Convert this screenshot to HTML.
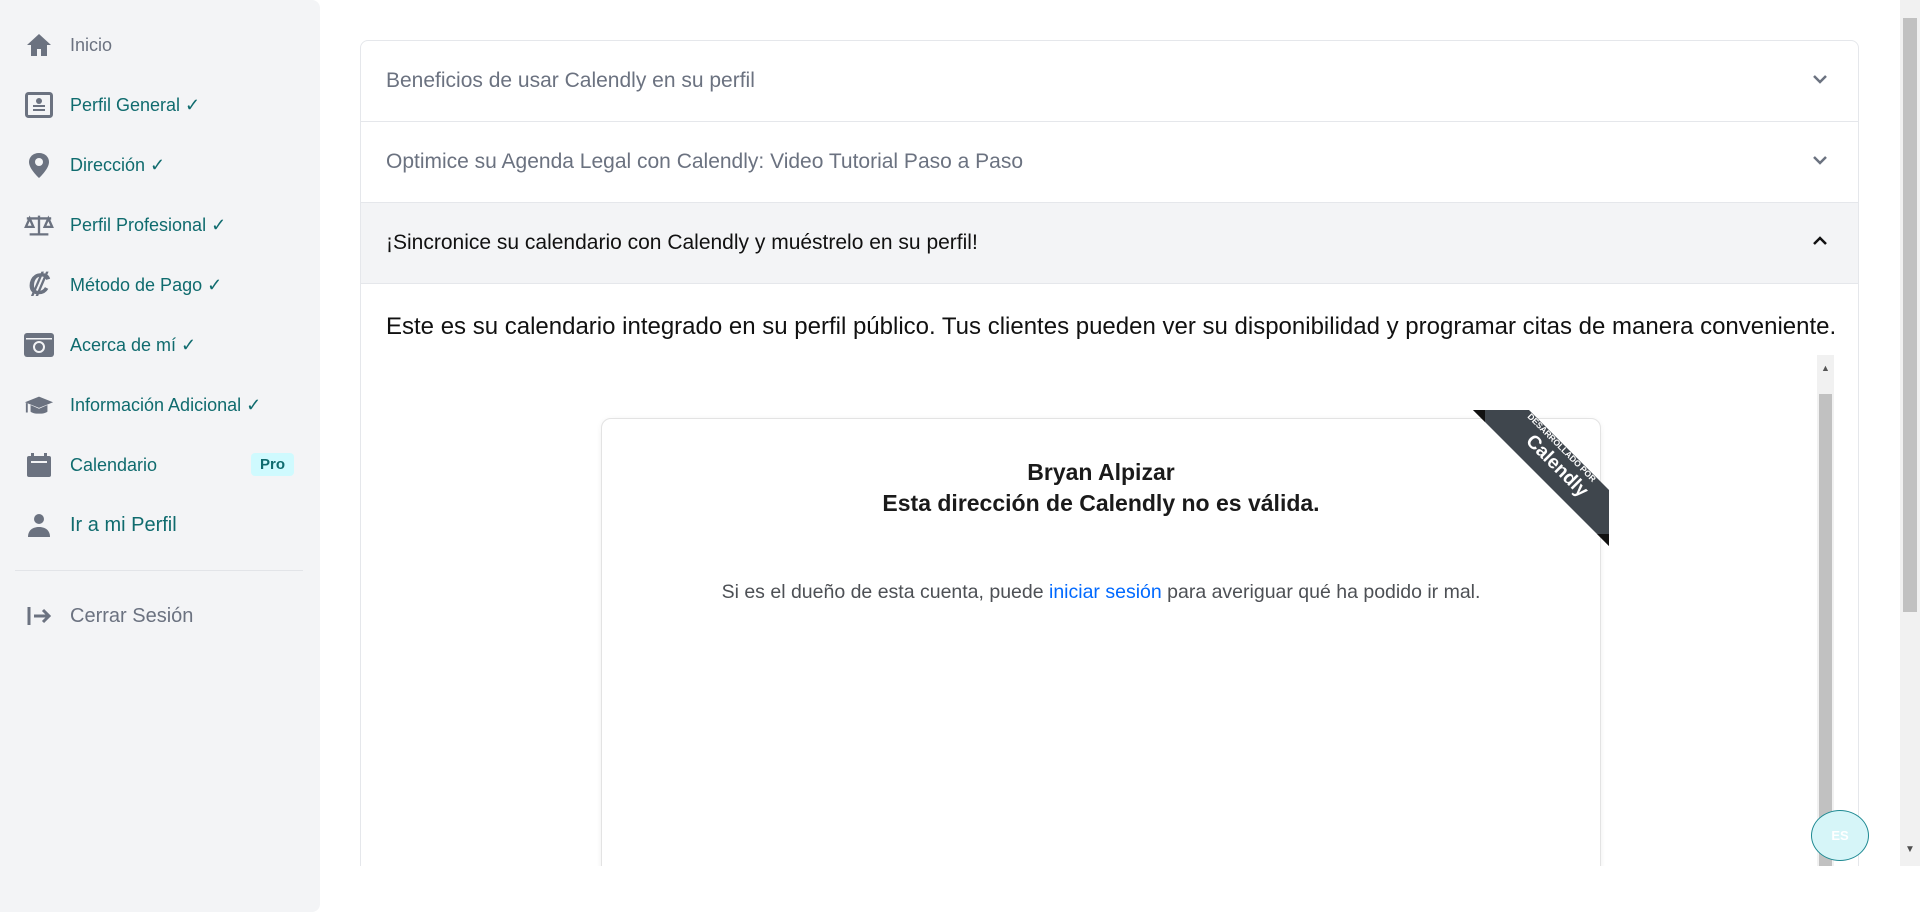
<!DOCTYPE html>
<html><head><meta charset="utf-8"><style>
*{box-sizing:border-box;margin:0;padding:0}
body{width:1920px;height:912px;overflow:hidden;background:#fff;font-family:"Liberation Sans",sans-serif;position:relative}
.side{position:absolute;left:0;top:0;width:320px;height:912px;background:#f3f4f6;border-radius:0 8px 8px 0}
.item{position:absolute;left:0;height:40px;display:flex;align-items:center;font-size:18px;color:#0f6b6e}
.item .ic{width:30px;margin-left:24px;display:flex;justify-content:center}
.item span.t{margin-left:16px}
.main{position:absolute;left:320px;top:0;width:1580px;height:866px;overflow:hidden}
.card{position:absolute;left:40px;top:40px;width:1499px;height:900px;border:1px solid #e5e7eb;border-radius:8px;overflow:hidden}
.row{height:81px;border-bottom:1px solid #e5e7eb;display:flex;align-items:center;padding-left:25px;font-size:21px;color:#6b7280;position:relative}
.row svg{position:absolute;right:30px;top:33px}
.para{position:absolute;left:25px;top:272px;font-size:24px;color:#111;white-space:nowrap}
.cal{position:absolute;left:240px;top:377px;width:1000px;height:600px;border:1px solid #e3e3e3;border-radius:10px;background:#fff;box-shadow:0 1px 6px rgba(0,0,0,.06)}
.sb{position:absolute;left:1456px;top:314px;width:17px;height:600px;background:#f1f1f1}
.pagesb{position:absolute;left:1900px;top:0;width:20px;height:866px;background:#f1f1f1}
</style></head><body>
<div class="side">
 <div class="item" style="top:25px;color:#6b7280"><div class="ic"><svg width="26" height="24" viewBox="0 0 26 24"><path d="M13 1L1 12h4v11h6v-7h4v7h6V12h4z" fill="#6b7280"/></svg></div><span class="t">Inicio</span></div>
 <div class="item" style="top:85px"><div class="ic"><svg width="28" height="26" viewBox="0 0 28 26"><rect x="1.5" y="1.5" width="25" height="23" rx="2" fill="none" stroke="#6b7280" stroke-width="3"/><circle cx="14" cy="9" r="3" fill="#6b7280"/><rect x="8" y="13" width="12" height="2" fill="#6b7280"/><rect x="8" y="17" width="12" height="2" fill="#6b7280"/></svg></div><span class="t">Perfil General ✓</span></div>
 <div class="item" style="top:145px"><div class="ic"><svg width="22" height="26" viewBox="0 0 22 26"><path d="M11 1C5 1 1 5 1 10c0 7 10 16 10 16s10-9 10-16c0-5-4-9-10-9z" fill="#6b7280"/><circle cx="11" cy="10" r="4" fill="#f3f4f6"/></svg></div><span class="t">Dirección ✓</span></div>
 <div class="item" style="top:205px"><div class="ic"><svg width="32" height="24" viewBox="0 0 32 24"><g fill="none" stroke="#6b7280" stroke-width="2.5"><path d="M16 2v20M6 22h20M3 5h26M6 5l-4 9h8zM26 5l-4 9h8z"/></g></svg></div><span class="t">Perfil Profesional ✓</span></div>
 <div class="item" style="top:265px"><div class="ic"><span style="font-size:30px;font-weight:bold;color:#6b7280;font-style:italic">₡</span></div><span class="t">Método de Pago ✓</span></div>
 <div class="item" style="top:325px"><div class="ic"><svg width="30" height="24" viewBox="0 0 30 24"><rect x="0" y="0" width="30" height="24" rx="3" fill="#6b7280"/><rect x="2" y="5" width="26" height="1.5" fill="#f3f4f6"/><circle cx="15" cy="14" r="5" fill="none" stroke="#f3f4f6" stroke-width="2"/></svg></div><span class="t">Acerca de mí ✓</span></div>
 <div class="item" style="top:385px"><div class="ic"><svg width="32" height="22" viewBox="0 0 32 22"><path d="M16 2L1 8l15 6 15-6z" fill="#6b7280"/><path d="M7 11v7c3 3 15 3 18 0v-7l-9 4z" fill="#6b7280"/><rect x="2" y="9" width="2" height="10" fill="#6b7280"/></svg></div><span class="t">Información Adicional ✓</span></div>
 <div class="item" style="top:445px;width:300px"><div class="ic"><svg width="26" height="26" viewBox="0 0 26 26"><rect x="1" y="4" width="24" height="21" rx="2" fill="#6b7280"/><rect x="5" y="1" width="3" height="6" fill="#6b7280"/><rect x="18" y="1" width="3" height="6" fill="#6b7280"/><rect x="5" y="9" width="16" height="2" fill="#f3f4f6"/></svg></div><span class="t">Calendario</span><span style="position:absolute;left:251px;top:8px;background:#cffafe;color:#0f6b6e;font-size:15px;font-weight:bold;padding:3px 9px;border-radius:4px">Pro</span></div>
 <div class="item" style="top:505px;font-size:20px"><div class="ic"><svg width="24" height="24" viewBox="0 0 24 24"><circle cx="12" cy="6" r="5" fill="#6b7280"/><path d="M1 24c0-7 5-10 11-10s11 3 11 10z" fill="#6b7280"/></svg></div><span class="t">Ir a mi Perfil</span></div>
 <div style="position:absolute;left:15px;top:570px;width:288px;height:1px;background:#e2e4e8"></div>
 <div class="item" style="top:596px;font-size:20px;color:#6b7280"><div class="ic"><svg width="26" height="22" viewBox="0 0 26 22"><g stroke="#6b7280" stroke-width="3" fill="none"><path d="M3 2v18M8 11h15M17 5l6 6-6 6"/></g></svg></div><span class="t">Cerrar Sesión</span></div>
</div>
<div class="main">
 <div class="card">
  <div class="row">Beneficios de usar Calendly en su perfil<svg width="16" height="10" viewBox="0 0 16 10"><path d="M2 2l6 6 6-6" stroke="#6b7280" stroke-width="2.5" fill="none"/></svg></div>
  <div class="row">Optimice su Agenda Legal con Calendly: Video Tutorial Paso a Paso<svg width="16" height="10" viewBox="0 0 16 10"><path d="M2 2l6 6 6-6" stroke="#6b7280" stroke-width="2.5" fill="none"/></svg></div>
  <div class="row" style="background:#f3f4f6;color:#111">¡Sincronice su calendario con Calendly y muéstrelo en su perfil!<svg width="16" height="10" viewBox="0 0 16 10"><path d="M2 8l6-6 6 6" stroke="#111" stroke-width="2.5" fill="none"/></svg></div>
  <div class="para">Este es su calendario integrado en su perfil público. Tus clientes pueden ver su disponibilidad y programar citas de manera conveniente.</div>
  <div class="cal">
   <div style="position:absolute;top:38px;width:100%;text-align:center;font-size:23px;font-weight:bold;color:#1a1a1a;line-height:31px">Bryan Alpizar<br>Esta dirección de Calendly no es válida.</div>
   <div style="position:absolute;top:162px;width:100%;text-align:center;font-size:19.5px;color:#4d5055">Si es el dueño de esta cuenta, puede <span style="color:#0069ff">iniciar sesión</span> para averiguar qué ha podido ir mal.</div>
  </div>
  <svg style="position:absolute;left:1110px;top:367px" width="140" height="140" viewBox="0 0 140 140">
   <polygon points="2,2 58,2 138,82 138,138" fill="#3f464d"/>
   <polygon points="2,2 14,2 14,14" fill="#111"/><polygon points="126,126 138,126 138,138" fill="#111"/>
   <text transform="translate(56,9) rotate(45)" font-family="Liberation Sans" font-size="8.5" font-weight="bold" fill="#fff">DESARROLLADO POR</text>
   <text transform="translate(54,34) rotate(45)" font-family="Liberation Sans" font-size="19" font-weight="bold" fill="#fff">Calendly</text>
  </svg>
  <div class="sb"><div style="position:absolute;top:0;left:0;width:17px;height:38px;text-align:center;font-size:9px;color:#555;padding-top:8px">▲</div><div style="position:absolute;top:39px;left:2px;width:13px;height:600px;background:#c1c1c1"></div></div>
 </div>
</div>
<div class="pagesb"><div style="position:absolute;left:3px;top:18px;width:14px;height:594px;background:#c1c1c1"></div><div style="position:absolute;left:0;top:844px;width:20px;text-align:center;font-size:10px;color:#505050">▼</div></div>
<div style="position:absolute;left:1811px;top:810px;width:58px;height:51px;border-radius:50%;background:#d6f5f8;border:1.5px solid #1f8a93;color:#fff;font-weight:bold;font-size:13px;display:flex;align-items:center;justify-content:center">ES</div>
</body></html>
